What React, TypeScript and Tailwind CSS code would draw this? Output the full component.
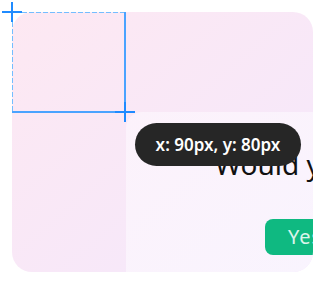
import React from 'react';

function SelectionGuide() {
  return (
    <svg className="absolute left-0 top-0" width="140" height="130" viewBox="0 0 140 130">
      {/* dashed edges */}
      <line x1="22" y1="12.5" x2="125" y2="12.5" stroke="#74bdff" strokeWidth="1" strokeDasharray="5 2" />
      <line x1="12.5" y1="22" x2="12.5" y2="112" stroke="#74bdff" strokeWidth="1" strokeDasharray="5 2" />
      {/* solid edges */}
      <line x1="125" y1="12" x2="125" y2="112" stroke="#4aa3ff" strokeWidth="2" />
      <line x1="12" y1="112" x2="125" y2="112" stroke="#4aa3ff" strokeWidth="2" />
      {/* crosshairs */}
      <line x1="2" y1="12" x2="22" y2="12" stroke="#1f8bff" strokeWidth="2" />
      <line x1="12" y1="2" x2="12" y2="22" stroke="#1f8bff" strokeWidth="2" />
      <line x1="115" y1="112" x2="135" y2="112" stroke="#1f8bff" strokeWidth="2" />
      <line x1="125" y1="102" x2="125" y2="122" stroke="#1f8bff" strokeWidth="2" />
    </svg>
  );
}

export default function App() {
  return (
    <div className="relative w-[328px] h-[289px] bg-white font-['Noto_Sans',sans-serif]">
      <div className="pl-3 pt-3">
        <div className="w-[301px] h-[260px] rounded-[20px] overflow-hidden bg-gradient-to-br from-[#fde8f2] to-[#f4e8fc] flex flex-col">
          <div className="ml-[114px] mt-[100px] flex-1 rounded-tl-[16px] bg-gradient-to-br from-[#fcf2fb] to-[#f9f4fe] flex flex-col">
            <h2 className="mt-[38px] pl-[89px] whitespace-nowrap text-[28px] leading-[28px] font-normal text-[#111]">
              Would you like to continue?
            </h2>
            <div className="mt-[41px] pl-[139px]">
              <button className="h-9 w-[90px] rounded-lg bg-[#0fb981] pl-[23px] text-left text-[20px] leading-9 tracking-[1px] text-white/85 whitespace-nowrap">
                Yes
              </button>
            </div>
          </div>
        </div>
      </div>

      <SelectionGuide />

      <div className="absolute left-[135px] top-[123px] w-[166px] h-[43px] rounded-full bg-[#262626] flex items-center justify-center">
        <span className="text-white text-[17px] font-semibold whitespace-nowrap">x: 90px, y: 80px</span>
      </div>
    </div>
  );
}
